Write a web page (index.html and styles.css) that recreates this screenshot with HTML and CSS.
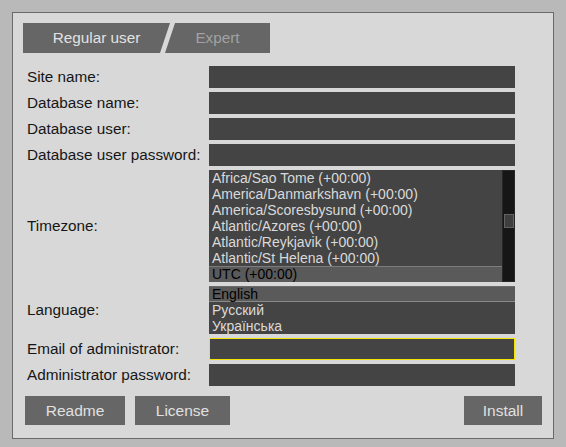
FILE: index.html
```html
<!DOCTYPE html>
<html>
<head>
<meta charset="utf-8">
<link rel="stylesheet" href="styles.css">
</head>
<body>
<div class="panel">
  <div class="tabs">
    <div class="tab tab-regular">Regular user</div>
    <div class="tab tab-expert">Expert</div>
  </div>
  <div class="form">
    <label class="label">Site name:</label>
    <div class="input"></div>
    <label class="label">Database name:</label>
    <div class="input"></div>
    <label class="label">Database user:</label>
    <div class="input"></div>
    <label class="label">Database user password:</label>
    <div class="input"></div>
    <label class="label">Timezone:</label>
    <div class="list tz">
      <div class="items">
        <div class="item">Africa/Sao Tome (+00:00)</div>
        <div class="item">America/Danmarkshavn (+00:00)</div>
        <div class="item">America/Scoresbysund (+00:00)</div>
        <div class="item">Atlantic/Azores (+00:00)</div>
        <div class="item">Atlantic/Reykjavik (+00:00)</div>
        <div class="item">Atlantic/St Helena (+00:00)</div>
        <div class="item selected sel-top">UTC (+00:00)</div>
      </div>
      <div class="scrollbar"><div class="thumb"></div></div>
    </div>
    <label class="label">Language:</label>
    <div class="list lang">
      <div class="items">
        <div class="item selected sel-bottom">English</div>
        <div class="item">Русский</div>
        <div class="item">Українська</div>
      </div>
    </div>
    <label class="label">Email of administrator:</label>
    <div class="input focused"></div>
    <label class="label">Administrator password:</label>
    <div class="input"></div>
  </div>
  <div class="buttons">
    <div class="btn btn-readme">Readme</div>
    <div class="btn btn-license">License</div>
    <div class="spacer"></div>
    <div class="btn btn-install">Install</div>
  </div>
</div>
</body>
</html>
```
FILE: styles.css
```css
html, body {
  margin: 0;
  padding: 0;
  background: #b9b9b9;
  font-family: "Liberation Sans", Arial, sans-serif;
}
.panel {
  box-sizing: border-box;
  margin: 12px 0 0 12px;
  width: 542px;
  height: 427px;
  border: 1px solid #6a6a6a;
  background: #d8d8d8;
  padding: 10px 11px 0 10px;
  display: flex;
  flex-direction: column;
}
.tabs {
  display: flex;
  height: 30px;
}
.tab {
  height: 30px;
  background: #666666;
  font-size: 15.3px;
  line-height: 30px;
  text-align: center;
}
.tab-regular {
  width: 152px;
  color: #e2e2e2;
  padding-right: 5px;
  box-sizing: border-box;
  clip-path: polygon(0 0, 147px 0, 137px 100%, 0 100%);
}
.tab-expert {
  width: 105px;
  margin-left: -10px;
  color: #a2a2a2;
  box-sizing: border-box;
  clip-path: polygon(10px 0, 100% 0, 100% 100%, 0 100%);
}
.form {
  margin-top: 13px;
  width: 492px;
  display: grid;
  grid-template-columns: 186px 306px;
  row-gap: 4px;
  align-items: center;
}
.label {
  font-size: 15.3px;
  color: #161616;
  padding-left: 4px;
  white-space: nowrap;
}
.input {
  height: 22px;
  background: #444444;
  box-sizing: border-box;
}
.input.focused {
  border: 1px solid #f2e400;
}
.list {
  background: #444444;
  display: flex;
}
.list.tz {
  height: 112px;
}
.list.lang {
  height: 48px;
}
.items {
  flex: 1;
  overflow: hidden;
}
.item {
  box-sizing: border-box;
  height: 16px;
  line-height: 16px;
  font-size: 14px;
  color: #dadada;
  padding-left: 3px;
  white-space: nowrap;
}
.item.selected {
  background: #5a5a5a;
  color: #000;
}
.item.sel-top {
  border-top: 1px solid #7c7c7c;
  line-height: 15px;
}
.item.sel-bottom {
  border-bottom: 1px solid #8a8a8a;
  border-top: 1px solid #6a6a6a;
  line-height: 14px;
}
.scrollbar {
  width: 13px;
  background: #161616;
  box-sizing: border-box;
  border: 1px solid #262626;
  padding-top: 43px;
  display: flex;
  justify-content: center;
}
.thumb {
  width: 10px;
  height: 14px;
  box-sizing: border-box;
  background: #3e3e3e;
  border: 1px solid #626262;
}
.buttons {
  margin-top: 10px;
  margin-left: 2px;
  display: flex;
  gap: 10px;
  height: 29px;
}
.spacer {
  flex: 1;
}
.btn {
  height: 29px;
  line-height: 29px;
  background: #666666;
  color: #e0e0e0;
  font-size: 15.5px;
  text-align: center;
}
.btn-readme { width: 100px; }
.btn-license { width: 95px; }
.btn-install { width: 78px; }
```
